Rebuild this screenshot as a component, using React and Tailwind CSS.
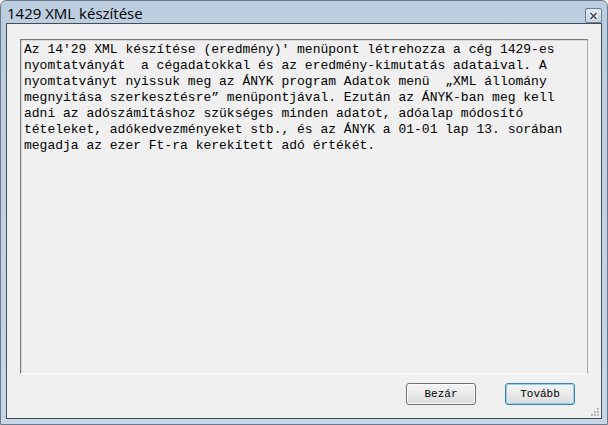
const lines = [
  "Az 14'29 XML készítése (eredmény)' menüpont létrehozza a cég 1429-es",
  "nyomtatványát  a cégadatokkal és az eredmény-kimutatás adataival. A",
  "nyomtatványt nyissuk meg az ÁNYK program Adatok menü  „XML állomány",
  "megnyitása szerkesztésre” menüpontjával. Ezután az ÁNYK-ban meg kell",
  "adni az adószámításhoz szükséges minden adatot, adóalap módosító",
  "tételeket, adókedvezményeket stb., és az ÁNYK a 01-01 lap 13. sorában",
  "megadja az ezer Ft-ra kerekített adó értékét.",
];

const mono = '"Courier New", "Liberation Mono", monospace';

function Button({ label, focused }) {
  return (
    <button
      className={
        "w-[70px] h-[22px] rounded-[3px] border text-[11px] text-black bg-gradient-to-b from-[#f6f6f6] to-[#dcdcdc] " +
        (focused
          ? "border-[#3c7fb1] shadow-[inset_0_0_0_1px_#8fd0f0]"
          : "border-[#707070] shadow-[inset_0_0_0_1px_#fcfcfc]")
      }
      style={{ fontFamily: mono }}
    >
      {label}
    </button>
  );
}

export default function App() {
  return (
    <div className="w-[608px] h-[425px] flex flex-col bg-gradient-to-b from-[#bccde0] to-[#c8d6e5] border border-[#6b7a8a] rounded-t-[6px] overflow-hidden">
      <div className="h-[22px] flex items-center justify-between pl-[6px] pr-[5px] pt-[3px]">
        <span
          className="text-[15px] text-black leading-none"
          style={{ fontFamily: '"Open Sans", "Noto Sans", sans-serif' }}
        >
          1429 XML készítése
        </span>
        <div className="w-[17px] h-[15px] mt-[4px] rounded-[2px] border border-[#6d7e91] bg-gradient-to-b from-[#e3ebf4] to-[#c4d2e1] flex items-center justify-center">
          <svg width="9" height="8" viewBox="0 0 9 8">
            <path d="M1.5 1 L7.5 7 M7.5 1 L1.5 7" stroke="#ffffff" strokeWidth="3.2" />
            <path d="M1.5 1 L7.5 7 M7.5 1 L1.5 7" stroke="#3a4250" strokeWidth="1.6" />
          </svg>
        </div>
      </div>
      <div className="mx-[5px] mb-[5px] flex-1 border border-[#3f4d5d] bg-[#f0f0f0] flex flex-col pl-[13px] pr-[13px] pt-[15px] pb-[13px] relative">
        <div className="h-[335px] border-t border-l border-[#7a7a7a] border-r border-r-[#a8a8a8] border-b border-b-[#ffffff] shadow-[inset_1px_1px_0_#d8d8d8] bg-[#f0f0f0] pl-[3px] pt-[2px]">
          <div
            className="whitespace-pre text-[13px] leading-[16px] text-black"
            style={{ fontFamily: mono }}
          >
            {lines.join("\n")}
          </div>
        </div>
        <div className="flex justify-end gap-[29px] mt-[9px] pr-[13px]">
          <Button label="Bezár" />
          <Button label="Tovább" focused />
        </div>
        <div className="absolute right-[2px] bottom-[2px] grid grid-cols-3 gap-[1px]">
          <span className="w-[2px] h-[2px]" />
          <span className="w-[2px] h-[2px]" />
          <span className="w-[2px] h-[2px] bg-[#b8b8b8]" />
          <span className="w-[2px] h-[2px]" />
          <span className="w-[2px] h-[2px] bg-[#b8b8b8]" />
          <span className="w-[2px] h-[2px] bg-[#b8b8b8]" />
          <span className="w-[2px] h-[2px] bg-[#b8b8b8]" />
          <span className="w-[2px] h-[2px] bg-[#b8b8b8]" />
          <span className="w-[2px] h-[2px] bg-[#b8b8b8]" />
        </div>
      </div>
    </div>
  );
}
